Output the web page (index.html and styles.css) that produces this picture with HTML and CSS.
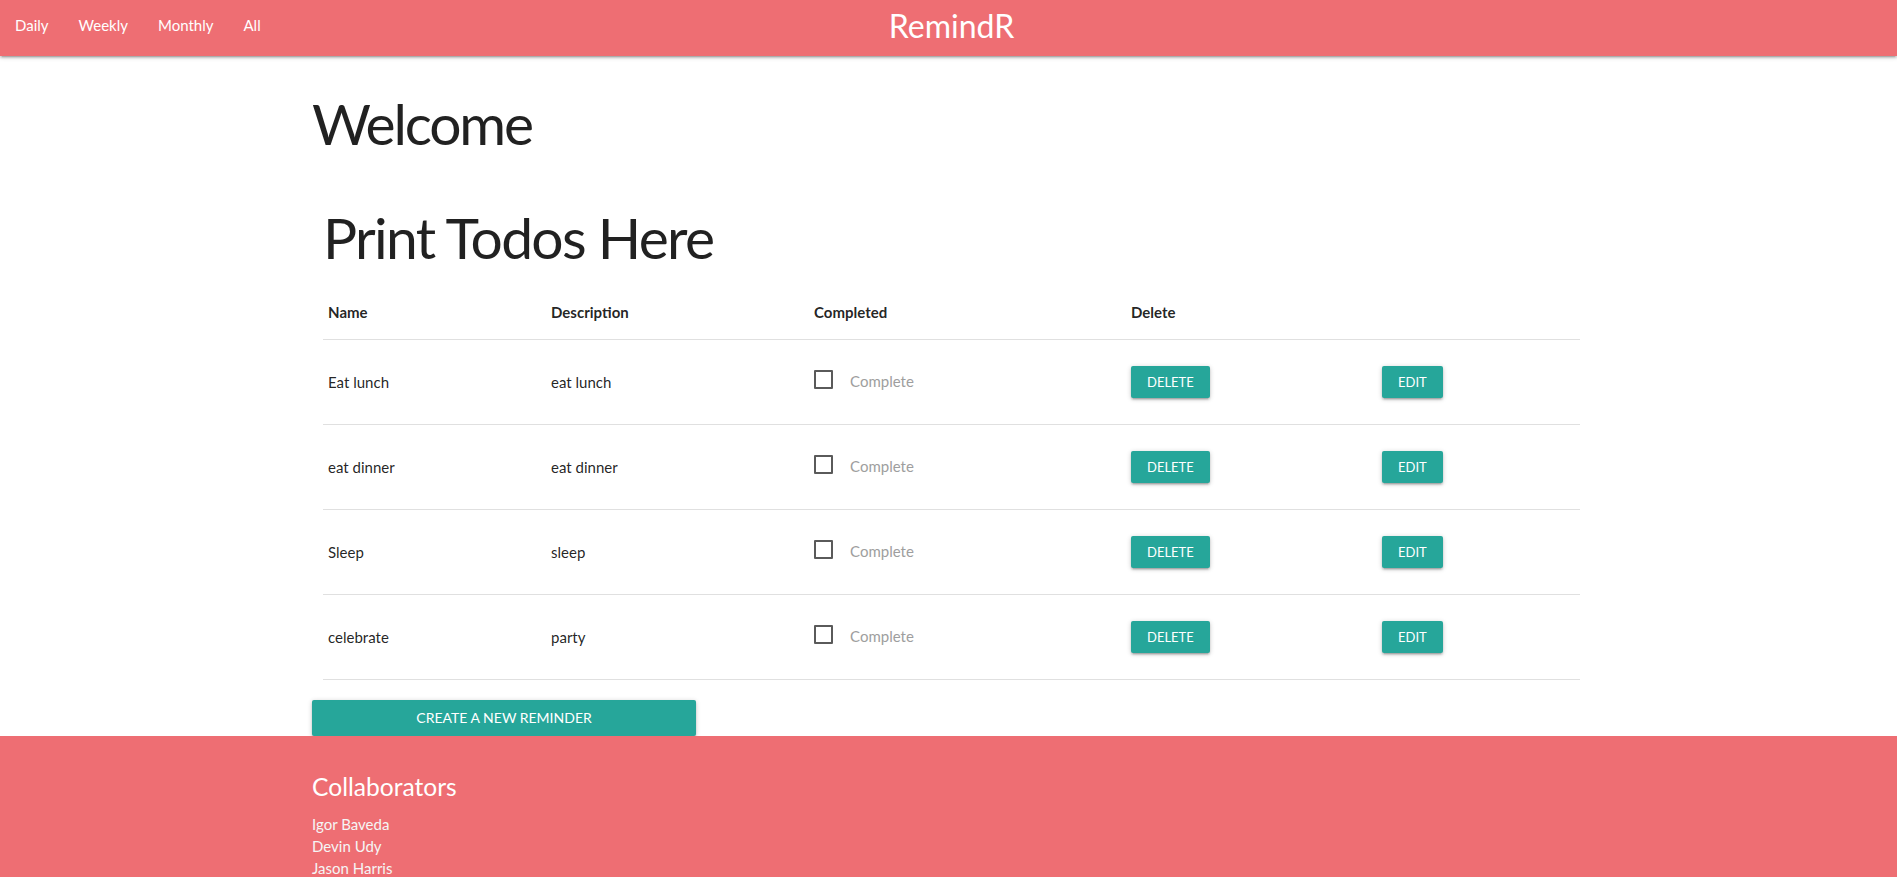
FILE: index.html
```html
<!DOCTYPE html>
<html lang="en">
<head>
<meta charset="utf-8">
<title>RemindR</title>
<link rel="stylesheet" href="styles.css">
</head>
<body>
<nav class="navbar">
  <ul class="nav-links">
    <li><a href="#">Daily</a></li>
    <li><a href="#">Weekly</a></li>
    <li><a href="#">Monthly</a></li>
    <li><a href="#">All</a></li>
  </ul>
  <a class="brand" href="#">RemindR</a>
  <div class="nav-spacer"></div>
</nav>

<main class="container">
  <h2 class="welcome">Welcome</h2>
  <section class="todos">
    <h2 class="todos-title">Print Todos Here</h2>
    <table class="todo-table">
      <colgroup>
        <col class="c-name"><col class="c-desc"><col class="c-done"><col class="c-del"><col class="c-edit">
      </colgroup>
      <thead>
        <tr><th>Name</th><th>Description</th><th>Completed</th><th>Delete</th></tr>
      </thead>
      <tbody>
        <tr>
          <td>Eat lunch</td><td>eat lunch</td>
          <td><label class="check"><span class="box"></span><span class="check-label">Complete</span></label></td>
          <td><button class="btn-small">Delete</button></td>
          <td><button class="btn-small">Edit</button></td>
        </tr>
        <tr>
          <td>eat dinner</td><td>eat dinner</td>
          <td><label class="check"><span class="box"></span><span class="check-label">Complete</span></label></td>
          <td><button class="btn-small">Delete</button></td>
          <td><button class="btn-small">Edit</button></td>
        </tr>
        <tr>
          <td>Sleep</td><td>sleep</td>
          <td><label class="check"><span class="box"></span><span class="check-label">Complete</span></label></td>
          <td><button class="btn-small">Delete</button></td>
          <td><button class="btn-small">Edit</button></td>
        </tr>
        <tr>
          <td>celebrate</td><td>party</td>
          <td><label class="check"><span class="box"></span><span class="check-label">Complete</span></label></td>
          <td><button class="btn-small">Delete</button></td>
          <td><button class="btn-small">Edit</button></td>
        </tr>
      </tbody>
    </table>
  </section>
  <button class="btn-create">Create a new reminder</button>
</main>

<footer class="page-footer">
  <div class="container">
    <h5 class="footer-title">Collaborators</h5>
    <ul class="names">
      <li>Igor Baveda</li>
      <li>Devin Udy</li>
      <li>Jason Harris</li>
    </ul>
  </div>
</footer>
</body>
</html>
```

FILE: styles.css
```css
html, body {
  margin: 0;
  padding: 0;
}
body {
  font-family: Lato, "Open Sans", sans-serif;
  font-size: 15px;
  line-height: 1.5;
  color: rgba(0, 0, 0, 0.87);
  background: #fff;
}

.navbar {
  display: grid;
  grid-template-columns: 1fr auto 1fr;
  align-items: start;
  height: 56px;
  background: #ee6e73;
  box-shadow: 0 2px 2px 0 rgba(0,0,0,0.14), 0 3px 1px -2px rgba(0,0,0,0.12), 0 1px 5px 0 rgba(0,0,0,0.2);
  position: relative;
  z-index: 2;
}
.nav-links {
  display: flex;
  list-style: none;
  margin: 0;
  padding: 0;
}
.nav-links a {
  display: block;
  padding: 0 15px;
  line-height: 50px;
  color: #fff;
  text-decoration: none;
  font-size: 15px;
}
.brand {
  color: #fff;
  text-decoration: none;
  font-size: 32px;
  line-height: 51px;
  margin-left: 6px;
}

.container {
  width: 70%;
  margin: 0 auto;
  padding-left: 27.5px;
  box-sizing: border-box;
}

.welcome {
  font-size: 56.96px;
  font-weight: 400;
  line-height: 1.1;
  letter-spacing: -2.2px;
  margin: 35.5px 0 0 0;
}

.todos {
  margin-left: 11px;
  width: 1257px;
}
.todos-title {
  font-size: 56.96px;
  font-weight: 400;
  line-height: 1.1;
  letter-spacing: -1.7px;
  margin: 52.3px 0 0 0;
}

.todo-table {
  width: 1257px;
  border-collapse: collapse;
  margin-top: 17.2px;
}
.c-name { width: 223px; }
.c-desc { width: 263px; }
.c-done { width: 317px; }
.c-del { width: 251px; }
.c-edit { width: 203px; }

.todo-table tr {
  border-bottom: 1px solid rgba(0, 0, 0, 0.12);
}
.todo-table th {
  text-align: left;
  font-weight: 700;
  padding: 15px 5px;
  font-size: 15px;
  line-height: 22.5px;
  height: 22.5px;
}
.todo-table td {
  padding: 0 5px;
  height: 84px;
  vertical-align: middle;
  font-size: 15px;
}

.check {
  display: flex;
  align-items: flex-start;
  gap: 17px;
  line-height: 25px;
}
.box {
  width: 19px;
  height: 19px;
  box-sizing: border-box;
  border: 2px solid #5a5a5a;
  border-radius: 1px;
  margin-top: 1px;
}
.check-label {
  color: #9e9e9e;
  font-size: 15px;
}

.btn-small,
.btn-create {
  border: none;
  border-radius: 2px;
  background: #26a69a;
  color: #fff;
  font-family: inherit;
  text-transform: uppercase;
  letter-spacing: 0;
  box-shadow: 0 2px 2px 0 rgba(0,0,0,0.14), 0 3px 1px -2px rgba(0,0,0,0.12), 0 1px 5px 0 rgba(0,0,0,0.2);
  cursor: pointer;
}
.btn-small {
  height: 32.4px;
  line-height: 32.4px;
  padding: 0 16px;
  font-size: 13px;
  display: block;
}
.btn-create {
  display: block;
  width: 384px;
  height: 36px;
  line-height: 36px;
  font-size: 14px;
  margin-top: 20.5px;
  padding: 0;
}

.page-footer {
  background: #ee6e73;
  color: #fff;
  padding-top: 20px;
  height: 200px;
}
.footer-title {
  font-size: 24.6px;
  font-weight: 400;
  line-height: 1.1;
  margin: 17px 0 0 0;
}
.names {
  list-style: none;
  margin: 13px 0 0 0;
  padding: 0;
  color: #f5f5f5;
  font-size: 15px;
  line-height: 22px;
}
```
